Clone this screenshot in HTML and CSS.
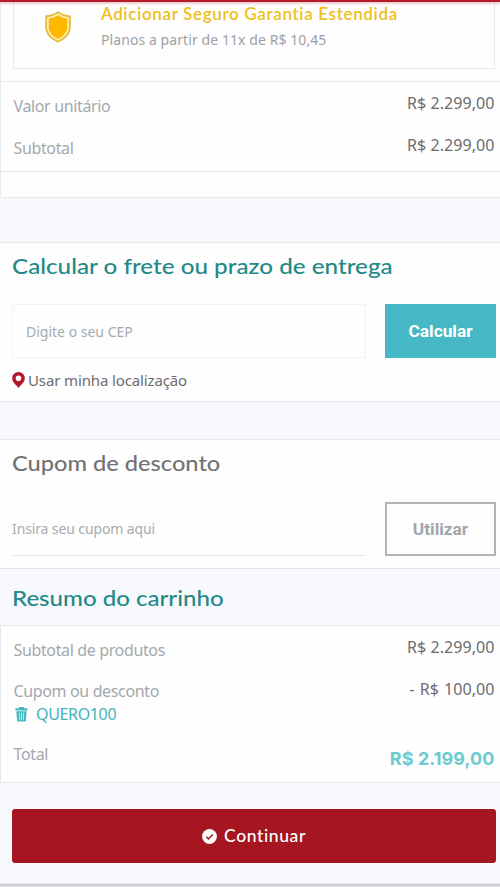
FILE: index.html
```html
<!DOCTYPE html>
<html lang="pt-BR">
<head>
<meta charset="utf-8">
<meta name="viewport" content="width=device-width, initial-scale=1">
<title>Carrinho</title>
<link rel="stylesheet" href="styles.css">
</head>
<body>
<div class="topbar"></div>
<main>
  <section class="product">
    <div class="warranty">
      <svg class="shield" width="28" height="34" viewBox="0 0 28 34"><path d="M14 1.2C10.2 4 6 5.1 1.2 5.4V17c0 7 5 12.200 12.800 15.600C21.800 29.200 26.800 24 26.800 17V5.400C22 5.100 17.800 4 14 1.200Z" fill="#e5bd3e"/><path d="M14 3.300C10.500 5.800 7 6.900 3.100 7.200V17c0 6 4.200 10.400 10.900 13.500C20.700 27.400 24.900 23 24.900 17V7.200C21 6.900 17.500 5.800 14 3.300Z" fill="#fff3b5"/><path d="M14 5C11 7.100 8 8.200 4.700 8.500V17c0 5.300 3.600 9 9.300 11.800C19.700 26 23.300 22.300 23.300 17V8.500C20 8.200 17 7.100 14 5Z" fill="#ffb700"/></svg>
      <div>
        <div class="warranty-title">Adicionar Seguro Garantia Estendida</div>
        <div class="warranty-plan">Planos a partir de 11x de R$ 10,45</div>
      </div>
    </div>
    <div class="prices">
      <div class="row"><span class="label">Valor unitário</span><span class="value">R$ 2.299,00</span></div>
      <div class="row"><span class="label">Subtotal</span><span class="value">R$ 2.299,00</span></div>
    </div>
  </section>

  <section class="panel freight">
    <h2 class="heading"><span class="h-freight">Calcular o frete ou prazo de entrega</span></h2>
    <div class="form">
      <div class="field boxed"><span class="ph-cep">Digite o seu CEP</span></div>
      <button class="btn solid"><span>Calcular</span></button>
    </div>
    <div class="location">
      <svg width="13" height="16" viewBox="0 0 13 16"><path fill="#b3172c" fill-rule="evenodd" d="M6.500 0A6.300 6.300 0 0 0 .2 6.300C.2 10.200 4 12.600 6.500 16 9 12.600 12.800 10.200 12.800 6.300A6.300 6.300 0 0 0 6.500 0Zm0 3.500a2.800 2.800 0 1 1 0 5.600 2.800 2.800 0 0 1 0-5.600Z"/></svg>
      <span class="loc-text">Usar minha localização</span>
    </div>
  </section>

  <section class="panel coupon">
    <h2 class="heading muted"><span class="h-coupon">Cupom de desconto</span></h2>
    <div class="form">
      <div class="field lined"><span class="ph-coupon">Insira seu cupom aqui</span></div>
      <button class="btn outline"><span>Utilizar</span></button>
    </div>
  </section>

  <h2 class="heading summary-title"><span class="h-summary">Resumo do carrinho</span></h2>
  <section class="summary">
    <div class="row"><span class="label">Subtotal de produtos</span><span class="value">R$ 2.299,00</span></div>
    <div class="row discount"><span class="label">Cupom ou desconto</span><span class="value minus">- R$ 100,00</span></div>
    <div class="code">
      <svg width="13" height="15" viewBox="0 0 13 15"><path fill="#45b7c4" d="M4 0h5v1.300h3.500v2.100H.5V1.300H4ZM1.300 4.200h10.400L10.800 14.500H2.200Z"/><path d="M4.300 5.500l.4 7.700M6.500 5.500v7.700M8.700 5.500l-.4 7.700" stroke="#d5f1f3" stroke-width=".8"/></svg>
      <span>QUERO100</span>
    </div>
    <div class="row total"><span class="label">Total</span><span class="value"><span class="total-value">R$ 2.199,00</span></span></div>
  </section>

  <button class="continue">
    <svg width="15" height="15" viewBox="0 0 15 15"><circle cx="7.500" cy="7.500" r="7.400" fill="#fff"/><path d="M4.300 7.800l2.200 2.100 4.200-4.300" fill="none" stroke="#a51620" stroke-width="1.500"/></svg>
    <span>Continuar</span>
  </button>
</main>
<div class="bottom"></div>
</body>
</html>
```
FILE: styles.css
```css
* { box-sizing: border-box; }
body {
  margin: 0;
  height: 887px;
  overflow: hidden;
  display: flex;
  flex-direction: column;
  background: #f7f9fc;
  color: #6c6c6e;
  font: 16px/22px "Noto Sans", "Open Sans", sans-serif;
}
main { flex: 1; }
span, .warranty-title, .warranty-plan { white-space: nowrap; }
.topbar { height: 2px; background: #b51c2b; box-shadow: 0 1px 3px #b51c2b70; z-index: 1; }
.product {
  height: 196px;
  background: #fefefe;
  border-left: 1px solid #e3ebee;
  border-bottom: 1px solid #e4e9ed;
}
.warranty {
  display: flex;
  gap: 29px;
  height: 67px;
  margin: 0 5px 0 12px;
  padding-left: 30px;
  border: 1px solid #e3ebee;
  border-top: 0;
}
.shield { margin-top: 8px; flex: none; }
.warranty-title { font: 600 17px/24px Lato, sans-serif; color: #edc01c; letter-spacing: .65px; }
.warranty-plan { font-size: 14px; line-height: 27px; color: #9ca1a6; letter-spacing: .08px; }
.prices {
  height: 91px;
  margin-top: 12px;
  padding: 11px 5px 0 12px;
  border-top: 1px solid #e3ebee;
  border-bottom: 1px solid #e2e9ec;
}
.row { display: flex; justify-content: space-between; height: 42px; }
.label { color: #a3a8ad; padding: 2px 0 0 .5px; letter-spacing: -.36px; }
.value { margin: -1px .5px 0 0; color: #6c6c6e; letter-spacing: .06px; }
.minus { word-spacing: 1px; }
.panel {
  margin-top: 44px;
  padding: 0 4px 0 12px;
  border-top: 1px solid #e5e9ed;
  border-bottom: 1px solid #e2e6ea;
  background: #fefefe;
}
.freight { height: 160px; }
.coupon { height: 130px; margin-top: 37px; }
.heading { margin: 0; font: 500 21px/45px Lato, sans-serif; color: #238987; }
.heading span { display: inline-block; transform-origin: left; margin-left: .3px; }
.h-freight { transform: scaleX(1.153); }
.h-coupon { transform: scaleX(1.125); }
.h-summary { transform: scaleX(1.146); }
.muted { color: #727274; }
.form { display: flex; justify-content: space-between; height: 54px; margin-top: 16px; }
.coupon .form { margin-top: 17px; }
.field { width: 354px; padding-top: 16px; font-size: 14px; color: #a6abaf; }
.ph-coupon { letter-spacing: -.12px; }
.boxed { padding-left: 13px; border: 1px solid #f2f3f4; }
.lined { border-bottom: 1px solid #e4e8eb; }
.btn { width: 111px; padding: 0; border: 0; font: 700 17.300px/20px Roboto, sans-serif; }
.solid { background: #46b8c5; color: #fff; }
.outline { background: none; border: 2px solid #afb5b8; color: #a1a6ab; }
.location { display: flex; align-items: center; gap: 3px; height: 22px; margin-top: 11px; font-size: 15px; letter-spacing: -.13px; }
.summary-title { height: 56px; padding: 6px 0 0 12px; }
.summary {
  height: 158px;
  padding: 11px 5px 0 12px;
  background: #fefefe;
  border: 1px solid #e2e8eb;
  border-right: 0;
}
.summary .row:first-child { height: 41px; }
.discount { height: 25px; }
.discount .value { margin-top: 0; }
.code { display: flex; align-items: center; gap: 8px; height: 22px; padding-left: 2px; color: #45b3bf; letter-spacing: -.35px; }
.total { margin-top: 16px; }
.total .value { padding-top: 8px; }
.total-value { font: 700 18px/22px Inter, sans-serif; color: #6ccad0; }
.continue {
  display: flex;
  align-items: center;
  justify-content: center;
  gap: 7px;
  width: 484px;
  height: 54px;
  margin: 26px 0 0 12px;
  padding: 0;
  border: 0;
  border-radius: 3px;
  background: #a51620;
  color: #fff;
  font: 500 17.500px/24px Lato, sans-serif;
  letter-spacing: .6px;
}
.bottom { height: 4px; background: linear-gradient(#edf0f2, #c7c9cb 55%, #e8eaec); }
```
